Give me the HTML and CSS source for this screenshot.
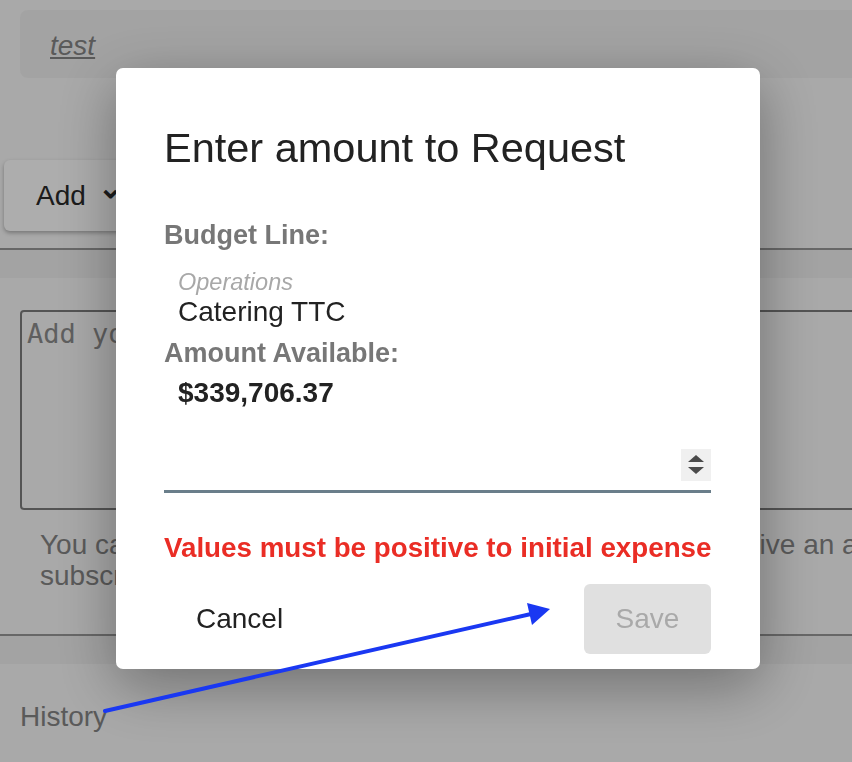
FILE: index.html
```html
<!DOCTYPE html>
<html lang="en">
<head>
    <meta charset="UTF-8">
    <meta name="viewport" content="width=device-width, initial-scale=1.0">
    <title>Request Expense</title>
    <link rel="stylesheet" href="styles.css">
</head>
<body>
    <div class="page">
        <div class="note-card">
            <a href="#" class="note-link">test</a>
        </div>

        <div class="actions">
            <button class="add-btn">Add <span class="chevron">&#8964;</span></button>
        </div>

        <div class="divider"></div>

        <div class="comment-box">
            <textarea class="comment-input" placeholder="Add your comment here"></textarea>
            <p class="comment-help">You can add a comment and all subscribed users will receive an alert.<br>subscribe to this request to be notified of new comments.</p>
        </div>

        <div class="divider"></div>

        <div class="history">History</div>
    </div>

    <div class="overlay">
        <div class="modal">
            <h2 class="modal-title">Enter amount to Request</h2>

            <div class="field-label">Budget Line:</div>
            <div class="budget-category">Operations</div>
            <div class="budget-name">Catering TTC</div>

            <div class="field-label">Amount Available:</div>
            <div class="amount-value">$339,706.37</div>

            <div class="amount-field">
                <input type="text" class="amount-input" inputmode="decimal">
                <div class="spinner">
                    <span class="spin-up"></span>
                    <span class="spin-down"></span>
                </div>
            </div>

            <div class="error-text">Values must be positive to initial expense</div>

            <div class="modal-buttons">
                <button class="btn-cancel">Cancel</button>
                <button class="btn-save" disabled>Save</button>
            </div>
        </div>
    </div>

    <svg class="pointer" width="852" height="762" viewBox="0 0 852 762">
        <line x1="105" y1="711" x2="531" y2="614" stroke="#1a38f2" stroke-width="4" stroke-linecap="round"/>
        <polygon points="550,609 527,603 532,625" fill="#1a38f2"/>
    </svg>
</body>
</html>
```

FILE: styles.css
```css
html, body {
    margin: 0;
    padding: 0;
    overflow: hidden;
}
body {
    font-family: "Liberation Sans", Arial, sans-serif;
    background-color: #f9f9f9;
    color: #222;
    width: 852px;
    height: 762px;
}
.page {
    width: 900px;
    padding-top: 10px;
}
.note-card {
    margin-left: 20px;
    height: 68px;
    background-color: #f1f1f1;
    border-radius: 8px;
    padding: 3px 0 0 30px;
    box-sizing: border-box;
    display: flex;
    align-items: center;
}
.note-link {
    font-size: 28px;
    font-style: italic;
    color: #858585;
    text-decoration: underline;
}
.actions {
    margin-top: 82px;
    padding-left: 4px;
    height: 71px;
}
.add-btn {
    height: 71px;
    padding: 0 32px;
    border: none;
    border-radius: 6px;
    background-color: #fff;
    box-shadow: 0 2px 4px rgba(0,0,0,0.3);
    font-family: inherit;
    font-size: 28px;
    color: #2a2a2a;
    display: flex;
    align-items: center;
    gap: 12px;
}
.chevron {
    font-size: 30px;
    font-weight: bold;
    line-height: 1;
    margin-top: -16px;
}
.divider {
    margin-top: 17px;
    border-top: 2px solid #999;
    height: 28px;
    background-color: #f0f0f0;
}
.comment-box {
    padding: 32px 0 0 20px;
}
.comment-input {
    display: block;
    box-sizing: border-box;
    width: 880px;
    height: 200px;
    border: 2px solid #7c7c7c;
    border-radius: 4px;
    background: transparent;
    padding: 6px 5px;
    font-family: "DejaVu Sans Mono", "Liberation Mono", monospace;
    font-size: 27px;
    resize: none;
}
.comment-input::placeholder {
    color: #8c8c8c;
}
.comment-help {
    margin: 19px 0 0 20px;
    font-size: 28px;
    line-height: 31px;
    color: #858585;
    white-space: nowrap;
}
.comment-box + .divider {
    margin-top: 43px;
}
.history {
    margin: 37px 0 0 20px;
    font-size: 28px;
    color: #858585;
}

/* modal */
.overlay {
    position: fixed;
    inset: 0;
    background-color: rgba(0,0,0,0.32);
    padding: 68px 0 0 116px;
}
.modal {
    box-sizing: border-box;
    width: 644px;
    height: 601px;
    background-color: #fff;
    border-radius: 7px;
    padding: 56px 49px 0 48px;
    box-shadow: 0 16px 60px rgba(0,0,0,0.35);
    display: flex;
    flex-direction: column;
}
.modal-title {
    margin: 0;
    font-size: 41.5px;
    line-height: 48px;
    font-weight: normal;
    color: #222;
}
.field-label {
    font-size: 27px;
    line-height: 32px;
    font-weight: bold;
    color: #777;
    margin-top: 47px;
}
.budget-category {
    margin-top: 17px;
    padding-left: 14px;
    font-size: 23.5px;
    line-height: 28px;
    font-style: italic;
    color: #a8a8a8;
}
.budget-name {
    padding-left: 14px;
    font-size: 28px;
    line-height: 32px;
}
.budget-name + .field-label {
    margin-top: 9px;
}
.amount-value {
    margin-top: 8px;
    padding-left: 14px;
    font-size: 28px;
    line-height: 32px;
    font-weight: bold;
}
.amount-field {
    margin-top: 24px;
    height: 57px;
    border-bottom: 3px solid #6a7e8a;
    display: flex;
    align-items: center;
}
.amount-input {
    flex: 1;
    border: none;
    outline: none;
    background: transparent;
    font-family: inherit;
    font-size: 28px;
}
.spinner {
    width: 30px;
    height: 32px;
    margin-top: 6px;
    background-color: #f0f0f0;
    display: flex;
    flex-direction: column;
    align-items: center;
    justify-content: center;
    gap: 5px;
}
.spin-up, .spin-down {
    width: 0;
    height: 0;
    border-left: 8px solid transparent;
    border-right: 8px solid transparent;
}
.spin-up {
    border-bottom: 7px solid #4a4a4a;
}
.spin-down {
    border-top: 7px solid #4a4a4a;
}
.error-text {
    margin-top: 39px;
    font-size: 27.75px;
    line-height: 32px;
    font-weight: bold;
    color: #ea2d25;
    white-space: nowrap;
}
.modal-buttons {
    margin-top: 20px;
    display: flex;
    justify-content: space-between;
    align-items: center;
}
.btn-cancel, .btn-save {
    font-family: inherit;
    font-size: 28px;
    border: none;
    border-radius: 6px;
    height: 70px;
    padding: 0 32px;
}
.btn-cancel {
    background: transparent;
    color: #222;
}
.btn-save {
    width: 127px;
    padding: 0;
    background-color: #e0e0e0;
    color: #a9a9a9;
}

.pointer {
    position: fixed;
    left: 0;
    top: 0;
    pointer-events: none;
}
```
